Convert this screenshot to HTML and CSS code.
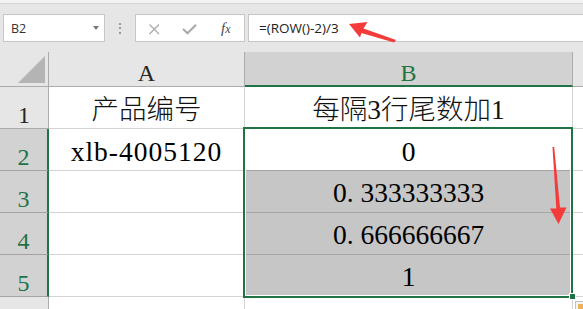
FILE: index.html
```html
<!DOCTYPE html>
<html>
<head>
<meta charset="utf-8">
<link rel="stylesheet" href="styles.css">
</head>
<body>
<div class="app">
  <div class="edge"></div>
  <div class="fbar">
    <div class="namebox"><span>B2</span><i class="caret"></i></div>
    <div class="grip"><b></b><b></b><b></b></div>
    <div class="fxbox">
      <svg viewBox="0 0 66 26">
        <path d="M1.5 9.5 L11 19 M11 9.5 L1.5 19" stroke="#ababab" stroke-width="1.3" fill="none"/>
        <path d="M35 14 L39.5 18.2 L48 9.8" stroke="#ababab" stroke-width="2.2" fill="none"/>
      </svg>
      <span class="fx">f<span class="sub">x</span></span>
    </div>
    <div class="formula">=(ROW()-2)/3</div>
  </div>
  <div class="sheet">
    <div class="corner"><span class="tri"></span></div>
    <div class="ch">A</div>
    <div class="ch sel">B</div>
    <div class="ch rest"></div>

    <div class="rh">1</div>
    <div class="c cjk">产品编号</div>
    <div class="c cjk">每隔3行尾数加1</div>
    <div class="c rest"></div>

    <div class="rh sel">2</div>
    <div class="c code">xlb-4005120</div>
    <div class="c mid active">0<div class="selbox"><span class="handle"></span><span class="paste"><i></i></span></div></div>
    <div class="c rest"></div>

    <div class="rh sel">3</div>
    <div class="c"></div>
    <div class="c fill">0<span class="pt">.</span>333333333</div>
    <div class="c rest"></div>

    <div class="rh sel">4</div>
    <div class="c"></div>
    <div class="c fill">0<span class="pt">.</span>666666667</div>
    <div class="c rest"></div>

    <div class="rh sel">5</div>
    <div class="c"></div>
    <div class="c fill">1</div>
    <div class="c rest"></div>

    <div class="rh last"></div>
    <div class="c last"></div>
    <div class="c last"></div>
    <div class="c rest last"></div>
  </div>
  <svg class="annot" viewBox="0 0 583 309">
    <polygon points="349,24 367.5,22 363.5,28.5 396,40 394,42.5 361.5,33 360,37.5" fill="#f53a3a"/>
    <polygon points="552.5,147 554.2,147 560,207.5 566.5,207.5 558.5,224 550,208.5 556.3,208.5" fill="#f53a3a"/>
  </svg>
</div>
</body>
</html>
```
FILE: styles.css
```css
* { box-sizing: border-box; margin: 0; padding: 0; }
html, body { width: 583px; height: 309px; overflow: hidden; background: #fff; }

.app { position: relative; width: 583px; height: 309px; overflow: hidden; background: #e6e6e6; }

.edge { height: 4px; background: #f3f3f3; border-bottom: 1px solid #d5d5d5; }

.fbar {
  display: flex; height: 48px; padding: 10px 0 10px 3px; background: #e6e6e6;
  font-family: "Open Sans", "Noto Sans", sans-serif; color: #333;
}
.namebox {
  display: flex; align-items: center; width: 102px; height: 28px; background: #fff;
  border: 1px solid #c6c6c6; padding: 0 5px 0 7px; font-size: 12.5px;
}
.caret {
  margin-left: auto; width: 0; height: 0;
  border-left: 3.5px solid transparent; border-right: 3.5px solid transparent; border-top: 4px solid #7a7a7a;
}
.grip { width: 30px; display: flex; flex-direction: column; align-items: center; justify-content: center; gap: 2.5px; }
.grip b { display: block; width: 2px; height: 2px; background: #9a9a9a; }
.fxbox {
  display: flex; align-items: center; width: 110px; height: 28px; background: #fff;
  border: 1px solid #c6c6c6; padding-left: 12px;
}
.fxbox svg { display: block; width: 66px; height: 26px; }
.fx { margin-left: 7px; font-family: "Liberation Serif", serif; font-style: italic; font-size: 15px; color: #4a4a4a; }
.fx .sub { font-size: 12px; }
.formula {
  flex: 1; height: 28px; margin-left: 3px; margin-right: -2px; background: #fff;
  border: 1px solid #c6c6c6; padding-left: 10px; display: flex; align-items: center;
  font-size: 13.5px; color: #222;
}

.sheet {
  display: grid; grid-template-columns: 49px 196px 328px 1fr;
  grid-template-rows: 35px repeat(5, 42px) 1fr; height: 257px; background: #fff;
}
.sheet > div { border-right: 1px solid #d4d4d4; border-bottom: 1px solid #d4d4d4; }

.sheet > .corner { display: flex; justify-content: flex-end; align-items: flex-end; padding: 0 3px 3px 0; background: #e6e6e6; border-color: #ababab; }
.tri { width: 0; height: 0; border-left: 27px solid transparent; border-bottom: 27px solid #b4b4b4; }

.sheet > .ch {
  background: #e6e6e6; border-color: #ababab; text-align: center;
  font: 24px/26px "Liberation Serif", serif; color: #262626; padding-top: 8px;
}
.sheet > .ch.sel { background: #d2d2d2; color: #217346; border-bottom: 2px solid #217346; }
.sheet > .ch.rest { border-right: none; }

.sheet > .rh {
  background: #e6e6e6; border-color: #ababab; text-align: center;
  font: 24px/26px "Liberation Serif", serif; color: #262626; padding-top: 15px;
}
.sheet > .rh.sel { background: #d2d2d2; color: #217346; border-right: 2px solid #217346; border-bottom-color: #a3a3a3; }
.sheet > .rh.last { border-bottom: none; }

.c {
  font: 27.5px/30px "Liberation Serif", "Noto Sans CJK SC", serif; color: #000;
  text-align: center; white-space: nowrap; overflow: hidden; padding-top: 8px;
}
.c.cjk { font-weight: 300; color: #111; }
.c.code { letter-spacing: 1px; }
.sheet > .c.mid { border-bottom-color: #a6a6a6; }
.sheet > .c.active { position: relative; overflow: visible; }
.sheet > .c.fill { background: #c6c6c6; border-bottom-color: #a6a6a6; padding-top: 7px; }
.pt { margin-right: 0.25em; }
.sheet > .c.rest { border-right: none; }
.sheet > .c.last { border-bottom: none; }

.selbox {
  position: absolute; left: -2px; top: -2px; width: 330px; height: 171px; z-index: 2;
  border: 2px solid #217346; box-shadow: inset 0 0 0 1px #fff;
}
.handle {
  position: absolute; left: 324px; top: 164px; width: 7px; height: 7px;
  background: #217346; border: 1px solid #fff;
}
.paste {
  position: absolute; left: 330px; top: 172px; width: 14px; height: 14px;
  background: #f4f4f4; border: 1px solid #c2c2c2; padding: 2px;
}
.paste i { display: block; width: 6px; height: 7px; background: #e8b45a; border-radius: 1px; }

.annot { position: absolute; left: 0; top: 0; width: 583px; height: 309px; z-index: 5; pointer-events: none; }
```
